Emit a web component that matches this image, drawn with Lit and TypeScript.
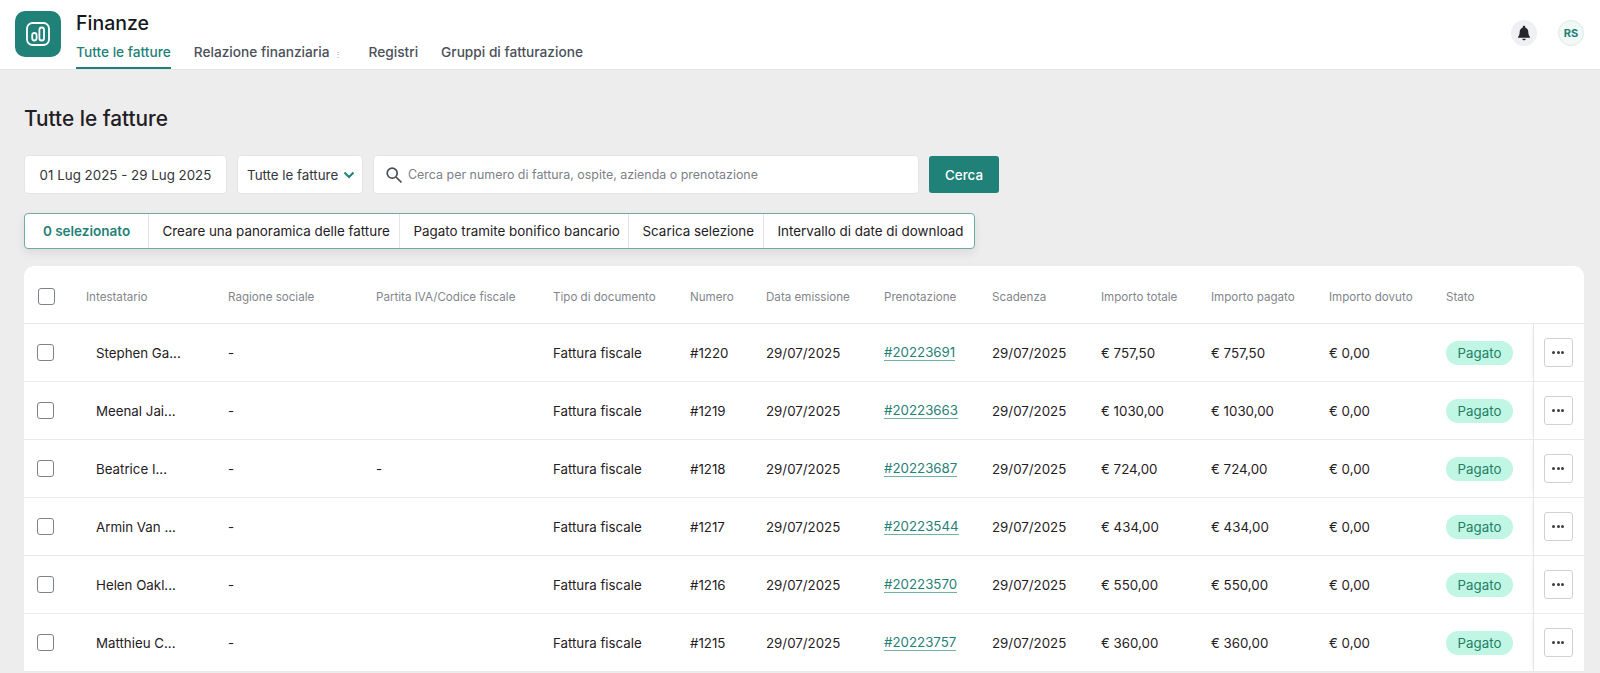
import { LitElement, html, css } from "lit";
import { customElement } from "lit/decorators.js";

const rows = [
  ["Stephen Ga...", "", "#1220", "#20223691", "757,50"],
  ["Meenal Jai...", "", "#1219", "#20223663", "1030,00"],
  ["Beatrice I...", "-", "#1218", "#20223687", "724,00"],
  ["Armin Van ...", "", "#1217", "#20223544", "434,00"],
  ["Helen Oakl...", "", "#1216", "#20223570", "550,00"],
  ["Matthieu C...", "", "#1215", "#20223757", "360,00"],
];

const heads = ["Intestatario", "Ragione sociale", "Partita IVA/Codice fiscale", "Tipo di documento", "Numero", "Data emissione", "Prenotazione", "Scadenza", "Importo totale", "Importo pagato", "Importo dovuto", "Stato"];

@customElement("app-root")
export class AppRoot extends LitElement {
  static styles = css`
    :host { display: block; height: 673px; overflow: hidden; background: #ededed; font-family: Inter, "Liberation Sans", sans-serif; color: #1f2024; }
    * { box-sizing: border-box; }
    header { height: 70px; background: #fff; display: flex; align-items: flex-start; padding: 11px 16px 0 15px; border-bottom: 1px solid #e6e6e6; }
    .logo { width: 46px; height: 46px; border-radius: 10px; background: #1f8177; display: flex; align-items: center; justify-content: center; margin-right: 15px; }
    .titles { flex: 1; }
    .app-name { font-size: 19.5px; font-weight: 500; line-height: 24px; color: #16181d; }
    nav { display: flex; margin-top: 7px; font-size: 13.7px; font-weight: 500; color: #4b5059; }
    nav a { display: block; height: 27px; line-height: 20px; margin-right: 23px; white-space: nowrap; }
    nav a.active { color: #1f8177; border-bottom: 2px solid #1f8177; }
    nav a.more { margin-right: 27px; }
    nav a.more span { font-size: 8px; color: #9a9ea6; margin-left: 4px; }
    .right { display: flex; gap: 21px; padding-top: 9px; }
    .circle { width: 26px; height: 26px; border-radius: 50%; display: flex; align-items: center; justify-content: center; }
    .bell { background: #eff0f3; }
    .avatar { background: #f1f8f6; border: 1px solid #dcece8; color: #1f8177; font-size: 11px; font-weight: 700; }
    main { padding: 0 16px 0 24px; }
    h1 { margin: 35px 0 0; font-size: 20.8px; font-weight: 500; line-height: 28px; color: #1f2024; }
    .filters { display: flex; align-items: center; margin-top: 22px; gap: 10px; height: 39px; font-size: 13.35px; color: #33363b; }
    .box { height: 39px; background: #fff; border: 1px solid #e4e4e4; border-radius: 4px; display: flex; align-items: center; }
    .date { width: 203px; justify-content: center; }
    .select { width: 126px; padding-left: 9px; gap: 5px; }
    .search { width: 546px; padding-left: 11px; gap: 5px; color: #7d8087; font-size: 12.45px; }
    .btn { width: 70px; height: 37px; background: #1f8177; color: #fff; border-radius: 3px; font-weight: 500; display: flex; align-items: center; justify-content: center; }
    .actions { display: inline-flex; margin-top: 19px; height: 36px; background: #fff; border: 1px solid #70aaa3; border-radius: 4px; box-shadow: 0 4px 10px rgba(0,0,0,.08); font-size: 13.4px; color: #1f2024; width: 951px; }
    .actions div { display: flex; align-items: center; padding-left: 13.5px; border-right: 1px solid #e2e4e6; white-space: nowrap; }
    .actions div:last-child { border-right: 0; flex: 1; }
    .actions .sel { width: 124px; padding-left: 0; justify-content: center; color: #1f8177; font-weight: 600; font-size: 13.5px; }
    .card { margin-top: 17px; width: 1560px; background: #fff; border-radius: 10px 10px 0 0; }
    .row { display: grid; grid-template-columns: 62px 142px 148px 177px 137px 76px 118px 108px 109px 110px 118px 117px 87px 51px; align-items: center; height: 58px; border-bottom: 1px solid #e9e9ea; font-size: 13.3px; color: #1f2024; }
    .row.head { height: 58px; padding-top: 5px; font-size: 11.6px; color: #83868c; }
    .row.head span { white-space: nowrap; }
    .check { width: 17px; height: 17px; border: 1.5px solid #7e8289; border-radius: 3px; margin-left: 13px; }
    .row.head .check { margin-left: 14px; margin-top: -1px; }
    .name { padding-left: 10px; }
    a.link { color: #1f8177; text-decoration: none; border-bottom: 1px solid #6fb0a8; line-height: 15px; justify-self: start; }
    .pill { width: 67px; height: 24px; border-radius: 12px; background: #c0f6e3; color: #1f7f66; display: flex; align-items: center; justify-content: center; font-size: 13.3px; }
    .act { height: 100%; border-left: 1px solid #e6e6e6; box-shadow: -3px 0 4px -3px rgba(0,0,0,.08); display: flex; align-items: center; justify-content: center; padding-right: 2px; }
    .dots { width: 29px; height: 29px; border: 1px solid #cfd0d4; border-radius: 3px; display: flex; align-items: center; justify-content: center; gap: 1.5px; }
    .dots i { width: 3px; height: 3px; background: #3a3d42; border-radius: 50%; }
    .w1 { width: 251px; }
    .w2 { width: 229px; }
    .w3 { width: 135px; }
  `;

  render() {
    return html`
      <header>
        <div class="logo">
          <svg width="28" height="28" viewBox="0 0 28 28" fill="none" stroke="#fff" stroke-width="1.8">
            <rect x="3" y="3" width="22" height="22" rx="5.5"/>
            <rect x="8.2" y="13" width="4.4" height="7.5" rx="2.2"/>
            <rect x="15.4" y="7.500" width="4.600" height="13" rx="2.300"/>
          </svg>
        </div>
        <div class="titles">
          <div class="app-name">Finanze</div>
          <nav>
            <a class="active">Tutte le fatture</a>
            <a class="more">Relazione finanziaria<span>⋮</span></a>
            <a>Registri</a>
            <a>Gruppi di fatturazione</a>
          </nav>
        </div>
        <div class="right">
          <div class="circle bell">
            <svg width="14" height="16" viewBox="0 0 14 16" fill="#24262b"><path d="M7 .8c.7 0 1.200.5 1.200 1.200v.4c2 .6 3.100 2.300 3.100 4.400 0 2.700.6 3.900 1.700 5.100v.9H1v-.9c1.100-1.200 1.700-2.400 1.700-5.100 0-2.100 1.100-3.800 3.100-4.400V2C5.800 1.300 6.300.8 7 .8z"/><path d="M5.300 13.700h3.400C8.600 14.700 7.900 15.300 7 15.300s-1.600-.6-1.700-1.600z"/></svg>
          </div>
          <div class="circle avatar">RS</div>
        </div>
      </header>
      <main>
        <h1>Tutte le fatture</h1>
        <div class="filters">
          <div class="box date">01 Lug 2025 - 29 Lug 2025</div>
          <div class="box select">Tutte le fatture
            <svg width="12" height="8" viewBox="0 0 12 8" fill="none" stroke="#1f8177" stroke-width="2"><path d="M1.500 1.500 6 6l4.500-4.500"/></svg>
          </div>
          <div class="box search">
            <svg width="18" height="18" viewBox="0 0 18 18" fill="none" stroke="#4a4d52" stroke-width="1.700"><circle cx="7.200" cy="7.200" r="5"/><path d="m11 11 5.500 5.500"/></svg>
            <span>Cerca per numero di fattura, ospite, azienda o prenotazione</span>
          </div>
          <div class="btn">Cerca</div>
        </div>
        <div class="actions">
          <div class="sel">0 selezionato</div>
          <div class="w1">Creare una panoramica delle fatture</div>
          <div class="w2">Pagato tramite bonifico bancario</div>
          <div class="w3">Scarica selezione</div>
          <div>Intervallo di date di download</div>
        </div>
        <div class="card">
          <div class="row head">
            <div class="check"></div>
            ${heads.map((h) => html`<span>${h}</span>`)}
            <span></span>
          </div>
          ${rows.map(
            (r) => html`<div class="row">
              <div class="check"></div>
              <span class="name">${r[0]}</span>
              <span>-</span>
              <span>${r[1]}</span>
              <span>Fattura fiscale</span>
              <span>${r[2]}</span>
              <span>29/07/2025</span>
              <a class="link">${r[3]}</a>
              <span>29/07/2025</span>
              <span>€ ${r[4]}</span>
              <span>€ ${r[4]}</span>
              <span>€ 0,00</span>
              <div class="pill">Pagato</div>
              <div class="act"><div class="dots"><i></i><i></i><i></i></div></div>
            </div>`
          )}
        </div>
      </main>
    `;
  }
}
